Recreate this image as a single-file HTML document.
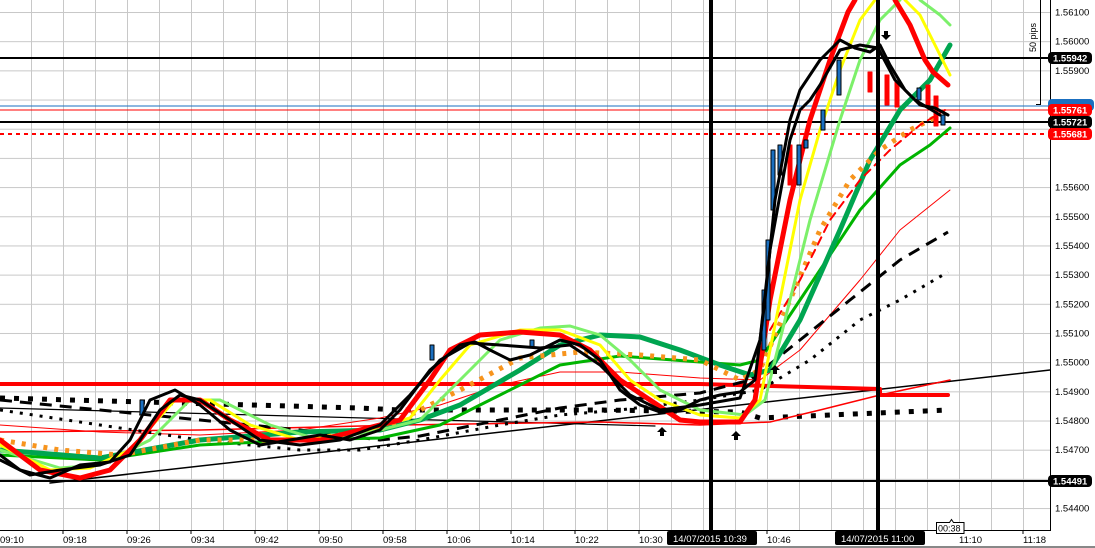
<!DOCTYPE html>
<html><head><meta charset="utf-8"><style>
html,body{margin:0;padding:0;background:#fff;width:1095px;height:548px;overflow:hidden}
svg{display:block;font-family:"Liberation Sans",sans-serif}
</style></head><body>
<svg width="1095" height="548" viewBox="0 0 1095 548" xmlns="http://www.w3.org/2000/svg">
<defs>
<pattern id="gv" x="-1" y="0" width="32" height="548" patternUnits="userSpaceOnUse"><rect x="0" y="0" width="1" height="548" fill="#c8c8c8"/></pattern>
<pattern id="gh" x="0" y="12" width="1095" height="29.18" patternUnits="userSpaceOnUse"><rect x="0" y="0" width="1095" height="1" fill="#c8c8c8"/></pattern>
</defs>
<rect x="0" y="0" width="1050" height="530" fill="url(#gv)"/>
<rect x="0" y="0" width="1050" height="530" fill="url(#gh)"/>
<g fill="none" stroke-linejoin="round" stroke-linecap="round">
<!-- horizontal levels -->
<line x1="0" y1="58" x2="1048" y2="58" stroke="#000" stroke-width="2"/>
<line x1="0" y1="106" x2="1048" y2="106" stroke="#1a6fc0" stroke-width="1"/>
<line x1="0" y1="110" x2="1048" y2="110" stroke="#f00" stroke-width="1"/>
<line x1="0" y1="122" x2="1048" y2="122" stroke="#000" stroke-width="2"/>
<line x1="0" y1="134" x2="1048" y2="134" stroke="#f00" stroke-width="2" stroke-dasharray="4 4" stroke-linecap="butt"/>
<line x1="0" y1="481" x2="1048" y2="481" stroke="#000" stroke-width="2"/>
<!-- trend lines -->
<line x1="50" y1="483" x2="1050" y2="370" stroke="#000" stroke-width="1.5"/>
<line x1="0" y1="408" x2="655" y2="426" stroke="#000" stroke-width="1.2"/>
<!-- red thick horizontal -->
<polyline points="0,384 700,384 880,389 880,395 948,395" stroke="#f00" stroke-width="4"/>
<!-- black squares -->
<polyline points="0,398 360,408 400,410 600,410 740,412 760,418 948,410" stroke="#000" stroke-width="5" stroke-dasharray="5 9" stroke-linecap="butt"/>
<!-- thin reds -->
<polyline points="0,425 100,432 200,435 300,430 380,418 440,405 500,385 560,372 620,372 700,378 760,380 800,350 860,280 900,230 950,190" stroke="#f00" stroke-width="1"/>
<polyline points="0,432 200,430 400,425 600,422 700,425 770,422 820,410 880,395 950,380" stroke="#f00" stroke-width="1.5"/>
<!-- black dashed / dotted -->
<polyline points="0,400 100,410 200,420 300,430 380,440 420,436 500,420 560,408 620,400 700,393 750,380 800,340 850,300 900,260 948,232" stroke="#000" stroke-width="3" stroke-dasharray="12 8" stroke-linecap="butt"/>
<polyline points="0,410 100,425 200,440 300,450 360,450 420,440 500,425 560,415 620,410 700,400 760,390 810,360 860,320 900,300 948,272" stroke="#000" stroke-width="3" stroke-dasharray="3 7" stroke-linecap="butt"/>
<!-- green lines -->
<polyline points="0,455 100,460 200,445 300,440 380,438 440,425 500,395 560,365 620,356 700,362 740,365 760,360 780,330 820,270 860,210 900,165 930,145 950,128" stroke="#00b400" stroke-width="3"/>
<polyline points="0,450 100,458 200,440 300,432 380,430 420,420 460,405 520,370 560,345 600,335 640,337 680,350 720,365 750,375 770,370 800,320 840,230 870,160 900,110 930,80 950,45" stroke="#00a550" stroke-width="5"/>
<!-- orange dotted -->
<polyline points="0,440 60,450 120,455 200,440 300,440 380,430 460,390 520,358 580,352 640,355 700,360 740,380 760,370 790,300 820,230 850,180 880,150 910,130 940,115" stroke="#f7941d" stroke-width="5" stroke-dasharray="4 7" stroke-linecap="butt"/>
<polyline points="770,330 800,280 830,220 860,180 890,150 920,125 945,110" stroke="#f00" stroke-width="2" stroke-dasharray="8 6"/>
<!-- light green -->
<polyline points="0,450 60,468 100,465 150,440 190,400 220,400 270,425 320,440 380,430 420,420 460,380 500,340 540,328 570,326 600,335 630,360 660,390 700,410 745,415 765,400 790,300 810,220 840,120 860,60 880,20 900,0" stroke="#7cf06a" stroke-width="3"/>
<polyline points="920,0 940,15 950,25" stroke="#7cf06a" stroke-width="3"/>
<!-- yellow -->
<polyline points="0,445 50,470 90,468 130,450 175,400 210,400 250,425 300,440 360,432 410,418 440,380 470,345 520,330 560,330 600,345 630,380 660,400 700,415 740,418 760,400 780,300 800,200 820,130 840,70 860,20 875,0" stroke="#ffff00" stroke-width="3"/>
<polyline points="905,0 920,15 935,45 950,75" stroke="#ffff00" stroke-width="3"/>
<!-- red thick -->
<polyline points="0,440 40,470 80,478 110,470 140,440 170,400 200,400 230,420 270,440 320,440 360,430 400,420 430,380 450,350 480,335 520,332 560,335 590,350 620,380 650,400 680,420 700,422 740,422 755,400 770,300 790,200 810,120 830,60 848,12 855,0" stroke="#f00" stroke-width="5"/>
<polyline points="895,0 910,25 925,60 933,72 948,85" stroke="#f00" stroke-width="5"/>
<!-- candles -->
<g stroke="#000" stroke-width="1">
<rect x="762" y="290" width="4" height="60" fill="#1a6fc0"/>
<rect x="766" y="240" width="4" height="80" fill="#1a6fc0"/>
<rect x="771" y="150" width="4" height="60" fill="#1a6fc0"/>
<rect x="778" y="145" width="4" height="30" fill="#1a6fc0"/>
<rect x="788" y="145" width="4" height="40" fill="#f00" stroke="#f00"/>
<rect x="797" y="145" width="4" height="40" fill="#1a6fc0"/>
<rect x="804" y="140" width="4" height="8" fill="#1a6fc0"/>
<rect x="821" y="110" width="4" height="20" fill="#1a6fc0"/>
<rect x="837" y="60" width="4" height="35" fill="#1a6fc0"/>
<rect x="868" y="72" width="4" height="20" fill="#f00" stroke="#f00"/>
<rect x="885" y="75" width="4" height="30" fill="#f00" stroke="#f00"/>
<rect x="895" y="82" width="4" height="25" fill="#f00" stroke="#f00"/>
<rect x="917" y="88" width="4" height="12" fill="#1a6fc0"/>
<rect x="926" y="85" width="4" height="20" fill="#f00" stroke="#f00"/>
<rect x="934" y="96" width="4" height="30" fill="#f00" stroke="#f00"/>
<rect x="941" y="115" width="4" height="10" fill="#1a6fc0"/>
<rect x="140" y="400" width="4" height="15" fill="#1a6fc0"/>
<rect x="430" y="345" width="4" height="15" fill="#1a6fc0"/>
<rect x="530" y="340" width="4" height="8" fill="#1a6fc0"/>
</g>
<!-- black price lines -->
<polyline points="0,455 20,470 50,478 80,465 110,462 130,440 150,400 175,390 200,405 230,430 260,445 290,440 320,435 350,440 380,430 400,410 430,370 460,345 475,342 490,350 510,360 530,355 560,340 580,345 600,360 620,390 640,405 660,412 680,410 700,400 720,395 740,392 755,380 765,300 775,200 790,120 800,90 820,60 840,40 855,48 870,52 880,45 890,65 905,90 920,105 935,108 948,115" stroke="#000" stroke-width="3"/>
<polyline points="0,460 30,475 60,470 100,465 130,455 160,410 180,395 200,400 230,420 260,440 300,445 340,440 380,425 410,395 440,360 470,343 500,345 540,348 570,345 600,365 630,395 660,410 700,405 740,398 760,340 770,250 790,140 800,110 810,100 820,85 840,50 860,45 878,48 895,80 915,100 940,115" stroke="#000" stroke-width="3"/>
</g>
<!-- arrows -->
<g fill="#000">
<path d="M662,427 l-5,5 h3 v4 h4 v-4 h3z"/>
<path d="M736,431 l-5,5 h3 v4 h4 v-4 h3z"/>
<path d="M775,365 l-5,5 h3 v4 h4 v-4 h3z"/>
<path d="M886,40 l-5,-5 h3 v-4 h4 v4 h3z"/>
</g>
<!-- vertical thick lines -->
<rect x="709" y="0" width="4" height="530" fill="#000"/>
<rect x="876" y="0" width="4" height="530" fill="#000"/>
<!-- pips bracket -->
<line x1="1040.5" y1="0" x2="1040.5" y2="105" stroke="#000" stroke-width="1"/>
<line x1="1036" y1="104.5" x2="1041" y2="104.5" stroke="#000" stroke-width="1"/>
<text transform="translate(1036,52) rotate(-90)" font-size="9" fill="#000">50 pips</text>
<!-- axes -->
<line x1="1050.5" y1="0" x2="1050.5" y2="531" stroke="#000"/>
<line x1="0" y1="530.5" x2="1051" y2="530.5" stroke="#000"/>
<line x1="0" y1="547" x2="1095" y2="547" stroke="#888" stroke-width="2"/>
<g font-size="9.5" fill="#000">
<text x="1055" y="15.5">1.56100</text><text x="1055" y="44.7">1.56000</text><text x="1055" y="73.9">1.55900</text>
<text x="1055" y="190.6">1.55600</text><text x="1055" y="219.8">1.55500</text><text x="1055" y="249">1.55400</text>
<text x="1055" y="278.2">1.55300</text><text x="1055" y="307.3">1.55200</text><text x="1055" y="336.5">1.55100</text>
<text x="1055" y="365.7">1.55000</text><text x="1055" y="394.9">1.54900</text><text x="1055" y="424">1.54800</text>
<text x="1055" y="453.2">1.54700</text><text x="1055" y="482.4">1.54600</text><text x="1055" y="511.6">1.54400</text>
</g>
<g font-size="9.5" font-weight="bold">
<rect x="1048" y="52" width="44" height="12" rx="4" fill="#000"/><text x="1053" y="61.5" fill="#fff">1.55942</text>
<rect x="1048" y="99" width="46" height="12" rx="4" fill="#1a6fc0"/>
<rect x="1048" y="104" width="44" height="12" rx="4" fill="#f00"/><text x="1053" y="113.5" fill="#fff">1.55761</text>
<rect x="1048" y="116" width="44" height="12" rx="4" fill="#000"/><text x="1053" y="125.5" fill="#fff">1.55721</text>
<rect x="1048" y="128" width="44" height="12" rx="4" fill="#f00"/><text x="1053" y="137.5" fill="#fff">1.55681</text>
<rect x="1048" y="475" width="44" height="12" rx="4" fill="#000"/><text x="1053" y="484.5" fill="#fff">1.54491</text>
</g>
<!-- time ticks and labels -->
<g stroke="#000"><line x1="63" y1="530" x2="63" y2="534"/><line x1="127" y1="530" x2="127" y2="534"/><line x1="191" y1="530" x2="191" y2="534"/><line x1="255" y1="530" x2="255" y2="534"/><line x1="319" y1="530" x2="319" y2="534"/><line x1="383" y1="530" x2="383" y2="534"/><line x1="447" y1="530" x2="447" y2="534"/><line x1="511" y1="530" x2="511" y2="534"/><line x1="575" y1="530" x2="575" y2="534"/><line x1="639" y1="530" x2="639" y2="534"/><line x1="767" y1="530" x2="767" y2="534"/><line x1="959" y1="530" x2="959" y2="534"/><line x1="1023" y1="530" x2="1023" y2="534"/></g>
<g font-size="9.5" fill="#000">
<text x="0" y="543">09:10</text><text x="63" y="543">09:18</text><text x="127" y="543">09:26</text><text x="191" y="543">09:34</text>
<text x="255" y="543">09:42</text><text x="319" y="543">09:50</text><text x="383" y="543">09:58</text><text x="447" y="543">10:06</text>
<text x="511" y="543">10:14</text><text x="575" y="543">10:22</text><text x="639" y="543">10:30</text><text x="767" y="543">10:46</text>
<text x="959" y="543">11:10</text><text x="1023" y="543">11:18</text>
</g>
<rect x="667" y="531" width="90" height="14" rx="2" fill="#000"/><text x="673" y="542" font-size="9.5" fill="#fff">14/07/2015 10:39</text>
<rect x="835" y="531" width="90" height="14" rx="2" fill="#000"/><text x="841" y="542" font-size="9.5" fill="#fff">14/07/2015 11:00</text>
<path d="M936.5,522.5 h13 l2,-3 l2,3 h10.5 v11 h-27.5z" fill="#fff" stroke="#000"/>
<text x="938" y="531.5" font-size="9" fill="#000">00:38</text>
</svg>
</body></html>
